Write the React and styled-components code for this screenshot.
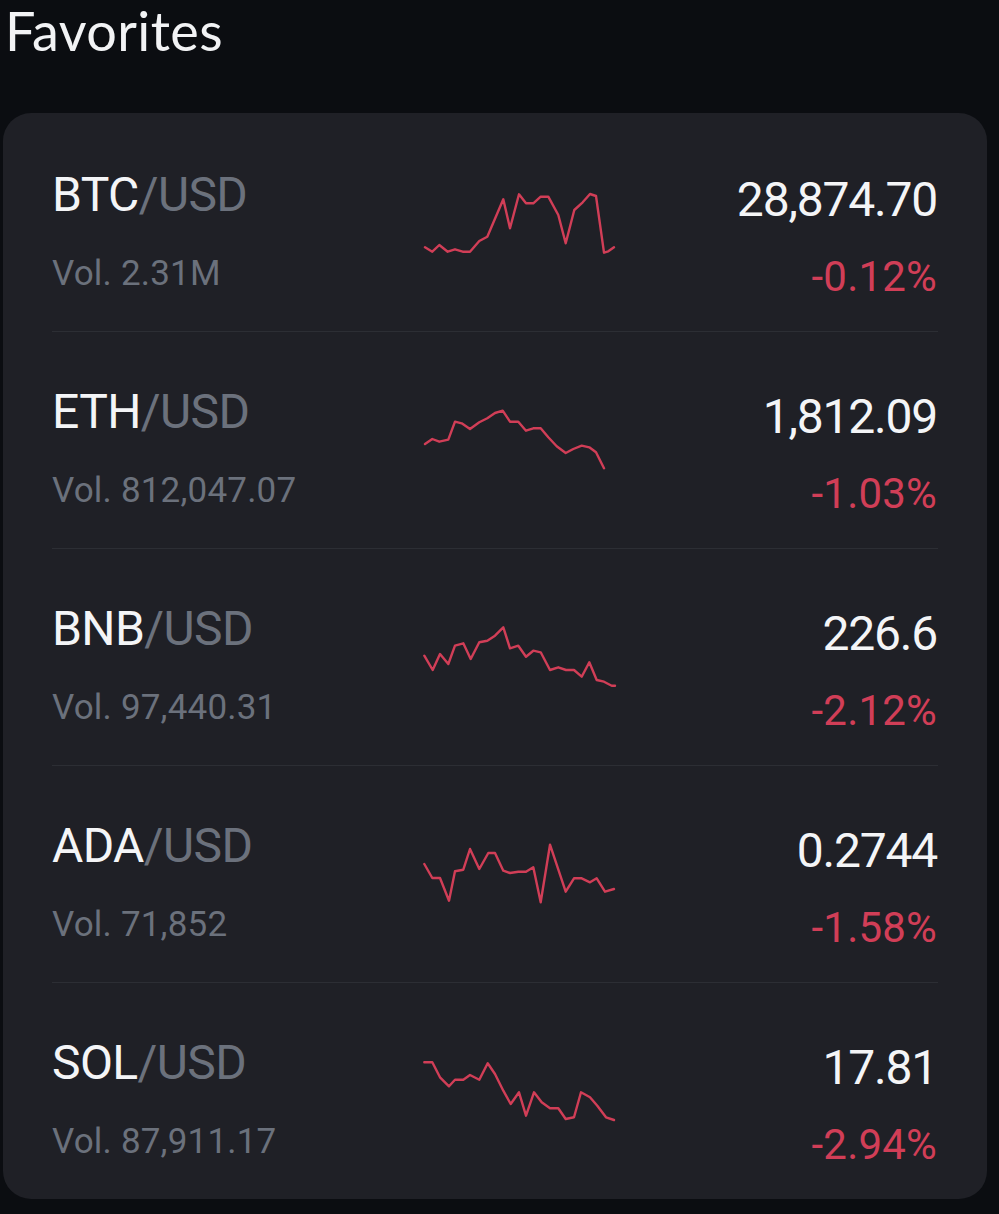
import React from "react";
import styled, { createGlobalStyle } from "styled-components";

const Global = createGlobalStyle`
  html, body { margin: 0; padding: 0; background: #0b0d11; }
  body { width: 999px; min-height: 1214px; font-family: Roboto, "Noto Sans", sans-serif; }
`;

const Page = styled.div`
  width: 999px;
  min-height: 1214px;
  background: #0b0d11;
  display: flex;
  flex-direction: column;
`;

const Title = styled.h1`
  margin: 0 0 51px 5px;
  height: 62px;
  font-family: Lato, "Noto Sans", sans-serif;
  font-weight: 400;
  font-size: 54px;
  line-height: 62px;
  letter-spacing: 0.4px;
  color: #f2f3f5;
`;

const Card = styled.div`
  margin-left: 3px;
  width: 984px;
  box-sizing: border-box;
  padding: 2px 0 0;
  background: #1f2026;
  border-radius: 28px;
  display: flex;
  flex-direction: column;
`;

const Row = styled.div`
  margin: 0 49px;
  height: 216px;
  display: grid;
  grid-template-columns: 368px 200px 1fr;
  border-bottom: ${(p) => (p.$last ? "none" : "1px solid #2c2e34")};
`;

const Left = styled.div`
  display: flex;
  flex-direction: column;
  padding-top: 52px;
`;

const Pair = styled.div`
  font-size: 48px;
  line-height: 56px;
  letter-spacing: -0.6px;
  color: #f4f5f7;
  white-space: nowrap;
`;

const Quote = styled.span`
  color: #6b717c;
`;

const Vol = styled.div`
  margin-top: 31px;
  font-size: 35px;
  line-height: 40px;
  letter-spacing: 0.2px;
  color: #6b717c;
  white-space: nowrap;
`;

const Chart = styled.svg`
  align-self: center;
  width: 200px;
  height: 80px;
  overflow: visible;
`;

const Right = styled.div`
  display: flex;
  flex-direction: column;
  align-items: flex-end;
  padding-top: 57px;
  padding-right: 1px;
`;

const Price = styled.div`
  font-size: 48px;
  line-height: 56px;
  letter-spacing: -1.2px;
  color: #f4f5f7;
  white-space: nowrap;
`;

const Change = styled.div`
  margin-top: 25px;
  font-size: 42px;
  line-height: 48px;
  letter-spacing: 0.2px;
  color: #d13e57;
  white-space: nowrap;
`;

const rows = [
  {
    base: "BTC",
    vol: "Vol. 2.31M",
    price: "28,874.70",
    change: "-0.12%",
    pts: "5,64.3 12.3,68.7 19.3,62 27.7,68.7 35,66.3 42.7,68.7 50,68.7 59.3,58 67.3,53.7 83.3,16.3 90,45.3 99,11.3 106,20.3 113.3,20.3 120.7,13.7 128.3,13.7 138.3,32 145.7,60.3 154.3,27 162.7,19.3 170,11 176,13 184,69.7 188.3,68.3 194,64.3",
  },
  {
    base: "ETH",
    vol: "Vol. 812,047.07",
    price: "1,812.09",
    change: "-1.03%",
    pts: "5,44 12.3,39 19.3,41.7 28.3,39.7 35,21.7 41.7,23.3 50,29 59.3,22.3 67.3,18.3 75,13 82.7,10.7 90,21.7 98.3,21.7 106,30.7 113.3,28.3 120.7,28.3 128.3,37.3 136.7,46.3 145.7,53 153.3,49 161.7,45.7 169.3,47.3 176,52.3 184,68.3",
  },
  {
    base: "BNB",
    vol: "Vol. 97,440.31",
    price: "226.6",
    change: "-2.12%",
    pts: "4.3,38.7 12.7,53 20,37 28.3,47 35,28.7 43.3,26.3 50.7,42 59.3,25.3 67.3,23.7 75,18.7 83.3,10.3 90,31.3 98.3,28.7 106,39.7 113.3,33.7 120.7,35.3 130,53 138.3,50.3 146,53 154,53 161.7,59.7 169.3,45.3 176.7,63 184,64.7 191.7,68.7 195,68.7",
  },
  {
    base: "ADA",
    vol: "Vol. 71,852",
    price: "0.2744",
    change: "-1.58%",
    pts: "4.3,30 12.3,44 20,44 29,66.7 35,37.3 43.3,35.7 50,15 59.3,35 68.3,19 75,19 83.3,36.7 90,39 98.3,37.7 106,37.7 113.3,33.3 120.7,68.3 130,10.7 145.7,57.7 154,44.3 161.7,44.3 170,48.3 176.7,44.3 185,57.7 194,55",
  },
  {
    base: "SOL",
    vol: "Vol. 87,911.17",
    price: "17.81",
    change: "-2.94%",
    pts: "4.3,11.3 12.3,11.3 20,26.3 29,35.3 35,28.7 43.3,28.7 50,24 59.3,28.7 67.7,12.3 75,23 83.3,39.7 90.7,53 99,41.3 106,64.7 114,41.3 121.7,51.3 130,57.3 138.3,57.3 145.7,68 154,66.3 161,41.3 170,46.3 177.3,54.7 186,66.3 194,69",
  },
];

export default function App() {
  return (
    <Page>
      <Global />
      <Title>Favorites</Title>
      <Card>
        {rows.map((r, i) => (
          <Row key={r.base} $last={i === rows.length - 1}>
            <Left>
              <Pair>
                {r.base}
                <Quote>/USD</Quote>
              </Pair>
              <Vol>{r.vol}</Vol>
            </Left>
            <Chart viewBox="0 0 200 80">
              <polyline
                points={r.pts}
                fill="none"
                stroke="#d13e57"
                strokeWidth="2.4"
                strokeLinejoin="round"
                strokeLinecap="round"
              />
            </Chart>
            <Right>
              <Price>{r.price}</Price>
              <Change>{r.change}</Change>
            </Right>
          </Row>
        ))}
      </Card>
    </Page>
  );
}
